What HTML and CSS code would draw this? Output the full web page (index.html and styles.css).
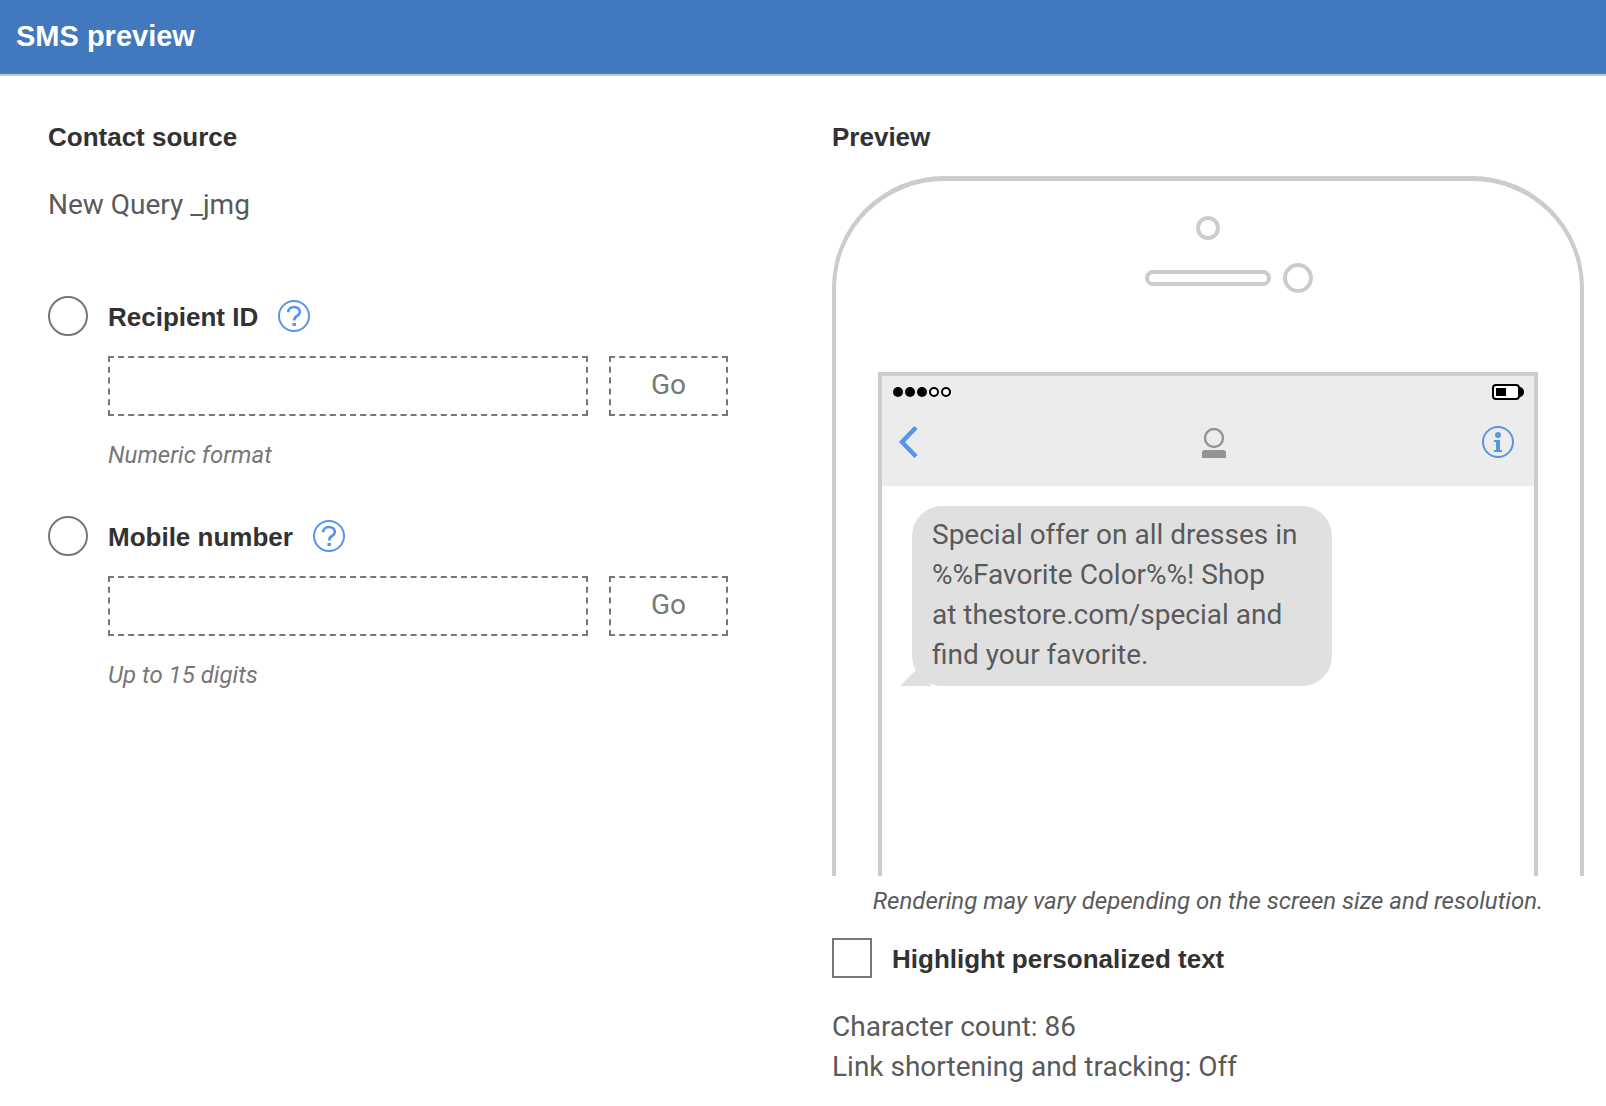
FILE: index.html
```html
<!DOCTYPE html>
<html lang="en">
<head>
  <meta charset="UTF-8" />
  <title>SMS preview</title>
  <meta name="viewport" content="width=device-width, initial-scale=1.0" />
  <link rel="stylesheet" href="styles.css">
</head>
<body>

  <header>
    <h1>SMS preview</h1>
  </header>

  <main>
    <section class="source">
      <h2>Contact source</h2>
      <p class="query-name">New Query _jmg</p>

      <div class="field">
        <div class="field-title">
          <input type="radio" name="source" id="byRecipient">
          <label for="byRecipient">Recipient ID</label>
          <button type="button" class="icon-btn" aria-label="Help">
            <svg width="32" height="32" viewBox="0 0 32 32" fill="none" stroke="#5596e6" stroke-width="2">
              <circle cx="16" cy="16" r="15" />
              <path d="M10.2 12.200C10.200 9 12.500 7 16 7s5.800 2 5.800 4.800c0 2.200-1 3.200-2.800 4.200-2 1.100-2.800 2-2.800 4.500" stroke-width="2.600" />
              <path d="M16.200 23v3" stroke-width="3.500" />
            </svg>
          </button>
        </div>
        <div class="field-row">
          <input type="text" aria-label="Recipient ID" aria-describedby="recipientHint">
          <button type="button" class="go-btn">Go</button>
        </div>
        <p class="hint" id="recipientHint">Numeric format</p>
      </div>

      <div class="field">
        <div class="field-title">
          <input type="radio" name="source" id="byMobile">
          <label for="byMobile">Mobile number</label>
          <button type="button" class="icon-btn" aria-label="Help">
            <svg width="32" height="32" viewBox="0 0 32 32" fill="none" stroke="#5596e6" stroke-width="2">
              <circle cx="16" cy="16" r="15" />
              <path d="M10.2 12.200C10.200 9 12.500 7 16 7s5.800 2 5.800 4.800c0 2.200-1 3.200-2.800 4.200-2 1.100-2.800 2-2.800 4.500" stroke-width="2.600" />
              <path d="M16.200 23v3" stroke-width="3.500" />
            </svg>
          </button>
        </div>
        <div class="field-row">
          <input type="text" aria-label="Mobile number" aria-describedby="mobileHint">
          <button type="button" class="go-btn">Go</button>
        </div>
        <p class="hint" id="mobileHint">Up to 15 digits</p>
      </div>
    </section>

    <section class="preview">
      <h2>Preview</h2>

      <div class="phone">
        <div class="camera"></div>
        <div class="earpiece">
          <span class="speaker"></span>
          <span class="sensor"></span>
        </div>

        <div class="screen">
          <div class="status-bar">
            <svg width="58" height="10" viewBox="0 0 58 10">
              <circle cx="5" cy="5" r="5" />
              <circle cx="17" cy="5" r="5" />
              <circle cx="29" cy="5" r="5" />
              <circle cx="41" cy="5" r="4" fill="#fff" stroke="#000" stroke-width="2" />
              <circle cx="53" cy="5" r="4" fill="#fff" stroke="#000" stroke-width="2" />
            </svg>
            <svg width="32" height="16" viewBox="0 0 32 16">
              <path d="M27 3h1c2 0 4 2.500 4 5s-2 5-4 5h-1z" />
              <rect x="1" y="1" width="26" height="14" rx="3" fill="#fff" stroke="#000" stroke-width="2" />
              <rect x="4" y="4" width="10" height="8" />
            </svg>
          </div>
          <div class="nav-bar">
            <button type="button" class="icon-btn" aria-label="Back">
              <svg width="20" height="32" viewBox="0 0 20 32" fill="none" stroke="#5596e6" stroke-width="4.500">
                <path d="M18 1.500L4 16l14 14.500" />
              </svg>
            </button>
            <svg class="avatar" width="24" height="30" viewBox="0 0 24 30">
              <circle cx="12" cy="10" r="9" fill="none" stroke="#949494" stroke-width="2.400" />
              <path d="M0 30v-5q0-3 3-3h18q3 0 3 3v5z" fill="#949494" />
            </svg>
            <button type="button" class="icon-btn info-btn" aria-label="Info">
              <svg width="32" height="32" viewBox="0 0 32 32" fill="#5596e6">
                <circle cx="16" cy="16" r="15" fill="none" stroke="#5596e6" stroke-width="2" />
                <circle cx="16" cy="9" r="3" />
                <path d="M12 14h6v10h2v2h-8v-2h2v-8h-2z" />
              </svg>
            </button>
          </div>
          <div class="bubble">
            Special offer on all dresses in<br>
            %%Favorite Color%%! Shop<br>
            at thestore.com/special and<br>
            find your favorite.
          </div>
        </div>
      </div>

      <p class="note">Rendering may vary depending on the screen size and resolution.</p>

      <div class="highlight">
        <input type="checkbox" id="highlight">
        <label for="highlight">Highlight personalized text</label>
      </div>

      <p class="details">
        Character count: 86<br>
        Link shortening and tracking: Off
      </p>
    </section>
  </main>

</body>
</html>
```
FILE: styles.css
```css
* {
  box-sizing: border-box;
}

body {
  margin: 0;
  font-family: Roboto, sans-serif;
  font-size: 28px;
  line-height: 40px;
  color: #5a5a5a;
  background: #fff;
}

h1, h2, p {
  margin: 0;
}

header {
  padding: 16px 16px 18px;
  background: #4178be;
  border-bottom: 2px solid #c7c7c7;
}

h1 {
  font-family: "Liberation Sans", Arial, sans-serif;
  font-size: 29px;
  color: #fff;
}

h2, label {
  font-family: "Liberation Sans", Arial, sans-serif;
  font-size: 26px;
  font-weight: bold;
  color: #323232;
}

label {
  padding-top: 2px;
}

main {
  display: grid;
  grid-template-columns: 1fr 1fr;
  gap: 32px;
  padding: 41px 22px 16px 48px;
}

.query-name {
  margin-top: 28px;
  margin-bottom: 71px;
}

.field {
  margin-bottom: 45px;
}

.field-title, .highlight {
  display: flex;
  align-items: center;
  gap: 20px;
  height: 40px;
}

input[type="radio"], input[type="checkbox"] {
  appearance: none;
  width: 40px;
  height: 40px;
  margin: 0;
  border: 2px solid #777;
  background: #fff;
}

input[type="radio"] {
  border-radius: 50%;
}

input[type="radio"]:checked, input[type="checkbox"]:checked {
  box-shadow: inset 0 0 0 8px #fff;
  background: #5596e6;
}

.icon-btn {
  padding: 0;
  border: none;
  background: none;
  cursor: pointer;
}

svg {
  display: block;
}

.field-row {
  display: flex;
  gap: 21px;
  margin: 20px 72px 23px 60px;
}

.field-row input, .go-btn {
  height: 60px;
  border: 2px dashed #777;
  background: #fff;
  font: inherit;
  color: #777;
}

.field-row input {
  flex: 1;
  min-width: 0;
  padding: 0 16px;
}

.go-btn {
  width: 119px;
  padding: 0 0 2px;
}

.hint, .note {
  font-size: 24px;
  line-height: 32px;
  font-style: italic;
}

.hint {
  margin-left: 60px;
  color: #777;
}

/* Phone */
.phone {
  display: flex;
  flex-direction: column;
  align-items: center;
  height: 700px;
  margin-top: 19px;
  padding: 35px 42px 0;
  border: 4px solid #ccc;
  border-top-width: 5px;
  border-bottom: none;
  border-radius: 112px 112px 0 0;
}

.camera, .speaker, .sensor {
  border: 4px solid #ccc;
  border-radius: 50%;
}

.camera {
  width: 24px;
  height: 24px;
}

.earpiece {
  display: grid;
  grid-template-columns: 1fr 126px 1fr;
  gap: 12px;
  align-items: center;
  width: 100%;
  margin-top: 23px;
}

.speaker {
  grid-column: 2;
  height: 16px;
  border-radius: 8px;
}

.sensor {
  width: 30px;
  height: 30px;
}

.screen {
  flex: 1;
  width: 100%;
  margin-top: 79px;
  border: 4px solid #ccc;
  border-bottom: none;
}

.status-bar, .nav-bar {
  align-items: center;
  background: #ececec;
}

.status-bar {
  display: flex;
  justify-content: space-between;
  padding: 8px 10px 8px 11px;
}

.nav-bar {
  display: grid;
  grid-template-columns: 1fr auto 1fr;
  padding: 18px 20px 28px 16px;
}

.nav-bar .icon-btn {
  justify-self: start;
}

.nav-bar .info-btn {
  justify-self: end;
}

.avatar {
  box-sizing: content-box;
  padding: 2px 0 0 16px;
}

.bubble {
  position: relative;
  width: 420px;
  max-width: 90%;
  margin: 20px 30px;
  padding: 9px 20px 11px;
  border-radius: 30px;
  background: #e0e0e0;
}

.bubble::after {
  content: "";
  position: absolute;
  left: -12px;
  bottom: 0;
  border-left: 16px solid transparent;
  border-right: 16px solid transparent;
  border-bottom: 16px solid #e0e0e0;
}

.note {
  margin: 9px 0 21px;
  text-align: center;
}

.details {
  margin-top: 29px;
}
```
